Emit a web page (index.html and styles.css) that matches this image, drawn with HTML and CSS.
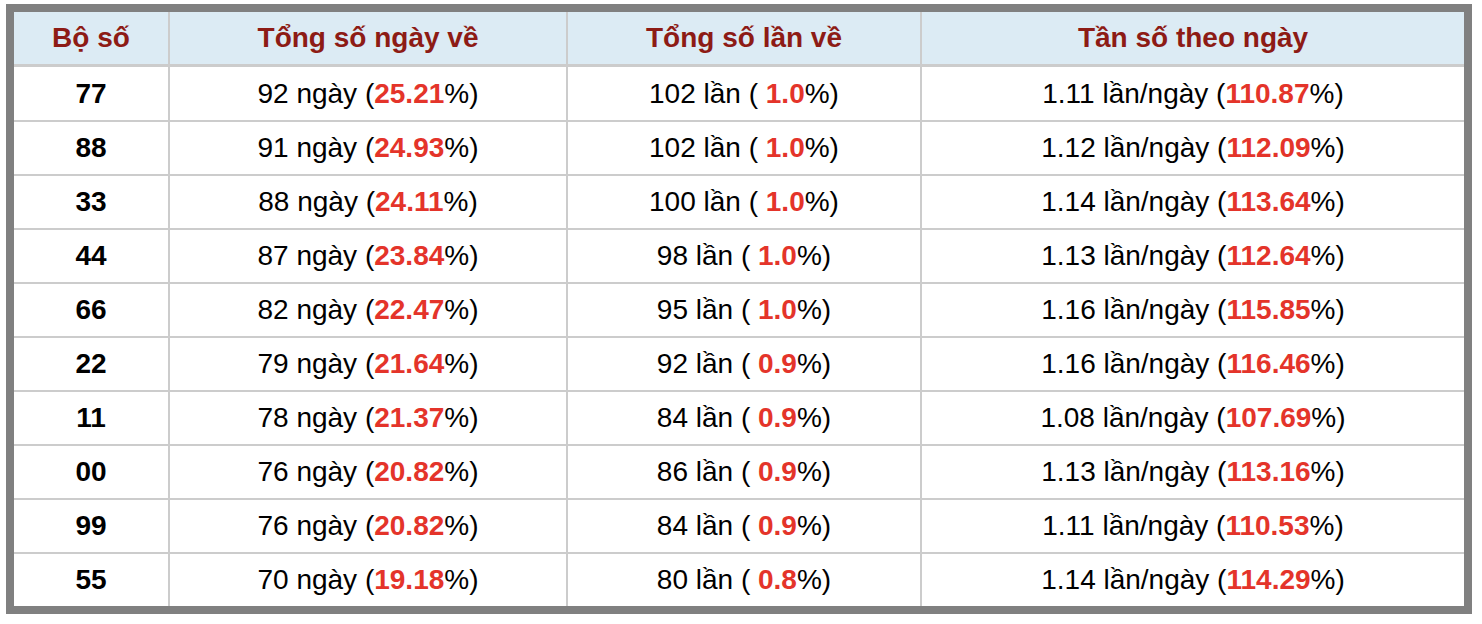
FILE: index.html
```html
<!DOCTYPE html>
<html lang="vi">
<head>
<meta charset="utf-8">
<title>Thống kê</title>
<link rel="stylesheet" href="styles.css">
</head>
<body>
<div class="frame">
<table class="stats">
<colgroup><col class="c1"><col class="c2"><col class="c3"><col class="c4"></colgroup>
<thead>
<tr><th>Bộ số</th><th>Tổng số ngày về</th><th>Tổng số lần về</th><th>Tần số theo ngày</th></tr>
</thead>
<tbody>
<tr><td class="num">77</td><td>92 ngày (<b>25.21</b>%)</td><td>102 lần ( <b>1.0</b>%)</td><td>1.11 lần/ngày (<b>110.87</b>%)</td></tr>
<tr><td class="num">88</td><td>91 ngày (<b>24.93</b>%)</td><td>102 lần ( <b>1.0</b>%)</td><td>1.12 lần/ngày (<b>112.09</b>%)</td></tr>
<tr><td class="num">33</td><td>88 ngày (<b>24.11</b>%)</td><td>100 lần ( <b>1.0</b>%)</td><td>1.14 lần/ngày (<b>113.64</b>%)</td></tr>
<tr><td class="num">44</td><td>87 ngày (<b>23.84</b>%)</td><td>98 lần ( <b>1.0</b>%)</td><td>1.13 lần/ngày (<b>112.64</b>%)</td></tr>
<tr><td class="num">66</td><td>82 ngày (<b>22.47</b>%)</td><td>95 lần ( <b>1.0</b>%)</td><td>1.16 lần/ngày (<b>115.85</b>%)</td></tr>
<tr><td class="num">22</td><td>79 ngày (<b>21.64</b>%)</td><td>92 lần ( <b>0.9</b>%)</td><td>1.16 lần/ngày (<b>116.46</b>%)</td></tr>
<tr><td class="num">11</td><td>78 ngày (<b>21.37</b>%)</td><td>84 lần ( <b>0.9</b>%)</td><td>1.08 lần/ngày (<b>107.69</b>%)</td></tr>
<tr><td class="num">00</td><td>76 ngày (<b>20.82</b>%)</td><td>86 lần ( <b>0.9</b>%)</td><td>1.13 lần/ngày (<b>113.16</b>%)</td></tr>
<tr><td class="num">99</td><td>76 ngày (<b>20.82</b>%)</td><td>84 lần ( <b>0.9</b>%)</td><td>1.11 lần/ngày (<b>110.53</b>%)</td></tr>
<tr><td class="num">55</td><td>70 ngày (<b>19.18</b>%)</td><td>80 lần ( <b>0.8</b>%)</td><td>1.14 lần/ngày (<b>114.29</b>%)</td></tr>
</tbody>
</table>
</div>
</body>
</html>
```
FILE: styles.css
```css
html, body {
  margin: 0;
  padding: 0;
  background: #ffffff;
}
body {
  font-family: "Liberation Sans", Arial, sans-serif;
  font-size: 28px;
  color: #000;
}
.frame {
  margin: 4px 0 0 6px;
  width: 1466px;
  box-sizing: border-box;
  border: 8px solid #808080;
  background: #fff;
}
.stats {
  width: 1450px;
  border-collapse: separate;
  border-spacing: 0;
  table-layout: fixed;
}
.c1 { width: 154px; }
.c2 { width: 398px; }
.c3 { width: 354px; }
.c4 { width: 544px; }
.stats th,
.stats td {
  padding: 0;
  text-align: center;
  vertical-align: middle;
  line-height: 30px;
}
.stats th {
  height: 52px;
  background: #dcebf4;
  color: #8d1b15;
  font-weight: bold;
  border-bottom: 3px solid #cccccc;
}
.stats th + th,
.stats td + td {
  border-left: 2px solid #cccccc;
}
.stats td {
  height: 52px;
  border-top: 2px solid #cccccc;
}
.stats tbody tr:first-child td {
  border-top: none;
  height: 53px;
}
.stats td b {
  color: #e4342a;
  font-weight: bold;
}
.stats td.num {
  font-weight: bold;
}
```
